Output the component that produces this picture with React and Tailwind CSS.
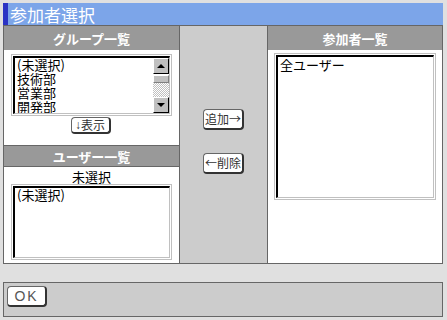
import React from "react";

function Btn({ children, className = "" }) {
  return (
    <div
      className={`flex items-center justify-center whitespace-nowrap bg-white border border-[#666] border-r-2 border-b-2 border-r-[#333] border-b-[#333] rounded-[4px] text-[12px] text-[#333] leading-none ${className}`}
    >
      {children}
    </div>
  );
}

function ListBox({ className = "", children, scroll }) {
  return (
    <div className={`border border-[#c0c0c0] p-px bg-white ${className}`}>
      <div className="h-full border-t-2 border-l-2 border-t-black border-l-black border-r border-b border-r-[#c0c0c0] border-b-[#c0c0c0] bg-white flex">
        <div className="flex-1 pl-[2px] text-[13px] leading-[14px] text-black overflow-hidden whitespace-nowrap">
          {children}
        </div>
        {scroll}
      </div>
    </div>
  );
}

function ScrollBtn({ up }) {
  return (
    <div className="w-[16px] h-[16px] bg-[#c0c0c0] border border-t-white border-l-white border-r-black border-b-black flex items-center justify-center">
      {up ? (
        <div className="w-0 h-0 border-x-[4px] border-x-transparent border-b-[4px] border-b-black" />
      ) : (
        <div className="w-0 h-0 border-x-[4px] border-x-transparent border-t-[4px] border-t-black" />
      )}
    </div>
  );
}

function ScrollBar() {
  return (
    <div className="w-[16px] h-full flex flex-col">
      <ScrollBtn up />
      <div className="h-[8px] mt-[1px] bg-[#c0c0c0] border border-t-white border-l-white border-r-[#808080] border-b-[#808080]" />
      <div className="flex-1 bg-[repeating-conic-gradient(#c0c0c0_0%_25%,#ffffff_0%_50%)] bg-[length:2px_2px]" />
      <ScrollBtn />
    </div>
  );
}

export default function App() {
  return (
    <div className="w-[447px] h-[320px] bg-[#e0e0e0] pt-[3px] pl-[3px] font-['Noto_Sans_CJK_JP',sans-serif] overflow-hidden">
      <div className="w-[440px] h-[22px] bg-[#7ca5e9] flex items-center">
        <div className="w-[5px] h-full bg-[#2b33c4]" />
        <span className="ml-[2px] text-white text-[17px] leading-none">参加者選択</span>
      </div>
      <div className="w-[440px] h-[239px] border border-[#666] flex">
        <div className="w-[176px] border-r border-[#666] bg-white flex flex-col">
          <div className="h-[24px] bg-[#999] flex items-center justify-center text-white font-bold text-[13px] leading-none">
            グループ一覧
          </div>
          <ListBox className="mt-[4px] mx-[7px] h-[62px]" scroll={<ScrollBar />}>
            <div>(未選択)</div>
            <div>技術部</div>
            <div>営業部</div>
            <div>開発部</div>
          </ListBox>
          <Btn className="mt-[1px] self-center w-[40px] h-[17px] -translate-x-[1px]">
            <span className="font-['Liberation_Sans',sans-serif]">↓</span>表示
          </Btn>
          <div className="mt-[11px] h-[22px] border-y border-[#666] bg-[#999] flex items-center justify-center text-white font-bold text-[13px] leading-none">
            ユーザー一覧
          </div>
          <div className="h-[17px] flex items-center justify-center text-[13px] leading-none text-black pt-[2px]">
            未選択
          </div>
          <ListBox className="mx-[7px] h-[76px]">
            <div>(未選択)</div>
          </ListBox>
        </div>
        <div className="w-[87px] bg-[#ccc] flex flex-col items-center pt-[83px] gap-[23px]">
          <Btn className="w-[41px] h-[21px]">追加→</Btn>
          <Btn className="w-[41px] h-[21px]">←削除</Btn>
        </div>
        <div className="flex-1 border-l border-[#666] bg-white flex flex-col">
          <div className="h-[24px] bg-[#999] flex items-center justify-center text-white font-bold text-[13px] leading-none">
            参加者一覧
          </div>
          <ListBox className="mt-[3px] mx-[6px] h-[147px]">
            <div className="pt-[1px]">全ユーザー</div>
          </ListBox>
        </div>
      </div>
      <div className="h-[18px]" />
      <div className="w-[440px] h-[35px] border border-[#666] bg-[#ccc] pt-[3px] pl-[3px]">
        <Btn className="w-[40px] h-[21px] font-['Liberation_Sans',sans-serif] text-[14px] tracking-[2px] text-[#555]">
          OK
        </Btn>
      </div>
    </div>
  );
}
